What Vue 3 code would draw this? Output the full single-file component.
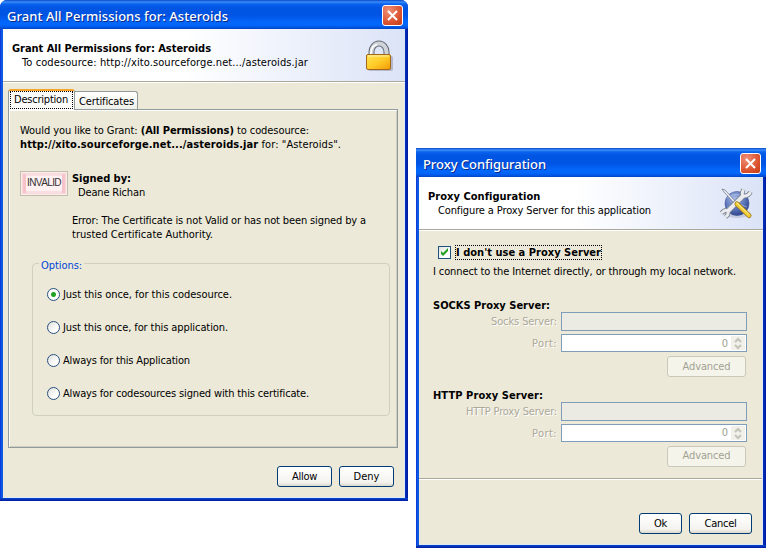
<script setup>
const options = [
  { text: 'Just this once, for this codesource.', width: 169 },
  { text: 'Just this once, for this application.', width: 165 },
  { text: 'Always for this Application', width: 127 },
  { text: 'Always for codesources signed with this certificate.', width: 246 },
]
const servers = [
  { title: 'SOCKS Proxy Server:', titleWidth: 117, label: 'Socks Server:', labelWidth: 66 },
  { title: 'HTTP Proxy Server:', titleWidth: 110, label: 'HTTP Proxy Server:', labelWidth: 91 },
]

// Spread the letters of a label so that it takes the given width.
const vFit = {
  mounted(el, { value }) {
    el.style.display = 'inline-block'
    el.style.whiteSpace = 'nowrap'
    const natural = el.getBoundingClientRect().width
    const count = el.textContent.length
    el.style.letterSpacing = (value - natural) / count + 'px'
  },
}
</script>

<template>
  <main class="desktop">
    <section class="window grant">
      <header class="titlebar">
        <span v-fit="221">Grant All Permissions for: Asteroids</span>
        <button class="close" aria-label="Close">
          <svg viewBox="0 0 19 19"><path d="M5 5l9 9M14 5l-9 9" /></svg>
        </button>
      </header>
      <div class="body">
        <div class="banner">
          <div>
            <div><b v-fit="199">Grant All Permissions for: Asteroids</b></div>
            <div class="sub"><span v-fit="286">To codesource: http://xito.sourceforge.net.../asteroids.jar</span></div>
          </div>
          <svg class="lock" viewBox="0 0 28 34">
            <defs>
              <linearGradient id="gold" x1="0" y1="0" x2="1" y2="1">
                <stop offset="0" stop-color="#ffe45a" /><stop offset=".5" stop-color="#ffcc28" /><stop offset="1" stop-color="#f39a08" />
              </linearGradient>
            </defs>
            <rect x="3" y="17" width="25" height="15" rx="2" fill="#8c8c9c" opacity=".5" />
            <path d="M6.500 17v-4a7.500 8.500 0 0 1 15 0v4" fill="none" stroke="#666b74" stroke-width="6" />
            <path d="M6.500 17v-4a7.500 8.500 0 0 1 15 0v4" fill="none" stroke="#d0d4da" stroke-width="4" />
            <path d="M6 16v-3a8 8 0 0 1 6-7.500" fill="none" stroke="#fff" stroke-width="1.500" />
            <rect x="1.500" y="15.500" width="24" height="15" rx="1.500" fill="url(#gold)" stroke="#a5651a" />
            <path d="M3 17h21" stroke="#fff2a0" />
          </svg>
        </div>

        <nav class="tabs">
          <div class="tab active"><span class="focus"><span v-fit="54">Description</span></span></div>
          <div class="tab"><span v-fit="55">Certificates</span></div>
        </nav>
        <div class="panel">
          <p><span v-fit="289">Would you like to Grant: <b>(All Permissions)</b> to codesource:</span></p>
          <p><span v-fit="321"><b>http://xito.sourceforge.net.../asteroids.jar</b> for: "Asteroids".</span></p>
          <div class="signature">
            <div class="stamp"><span v-fit="34">INVALID</span></div>
            <div>
              <p><b v-fit="59">Signed by:</b></p>
              <p class="signer"><span v-fit="67">Deane Richan</span></p>
              <p class="error"><span v-fit="294">Error: The Certificate is not Valid or has not been signed by a</span></p>
              <p><span v-fit="141">trusted Certificate Authority.</span></p>
            </div>
          </div>
          <div class="group">
            <div class="legend"><span v-fit="41">Options:</span></div>
            <div v-for="(option, i) in options" :key="i" class="option">
              <span class="radio" :class="{ on: i === 0 }"></span>
              <span v-fit="option.width">{{ option.text }}</span>
            </div>
          </div>
        </div>
        <footer class="actions">
          <button class="btn"><span v-fit="25">Allow</span></button>
          <button class="btn"><span v-fit="26">Deny</span></button>
        </footer>
      </div>
    </section>

    <section class="window proxy">
      <header class="titlebar">
        <span v-fit="123">Proxy Configuration</span>
        <button class="close" aria-label="Close">
          <svg viewBox="0 0 19 19"><path d="M5 5l9 9M14 5l-9 9" /></svg>
        </button>
      </header>
      <div class="body">
        <div class="banner">
          <div>
            <div><b v-fit="112">Proxy Configuration</b></div>
            <div class="sub"><span v-fit="213">Configure a Proxy Server for this application</span></div>
          </div>
          <svg class="tools" viewBox="0 0 34 34">
            <defs>
              <radialGradient id="globe" cx=".4" cy=".3" r=".75">
                <stop offset="0" stop-color="#a9bbe8" /><stop offset=".6" stop-color="#5872b8" /><stop offset="1" stop-color="#2c3f86" />
              </radialGradient>
            </defs>
            <ellipse cx="18" cy="29" rx="11" ry="3" fill="#9aa2bf" opacity=".4" />
            <circle cx="18" cy="17.500" r="12" fill="url(#globe)" stroke="#3e5294" stroke-width=".6" />
            <path d="M8 12q8-5 12-3M8 21q10-5 20 0" fill="none" stroke="#b9c8ed" opacity=".6" />
            <path d="M3 3l3 1 12 13-2 1L5 6z" fill="#eceff5" stroke="#777d8c" stroke-width=".8" />
            <path d="M7 27L26 8" fill="none" stroke="#747b88" stroke-width="5.600" />
            <path d="M24.500 3.500q-3 6 1 6.500 4 0 6-4M2.500 27q4-4 6-2 2 3-2 6" fill="none" stroke="#747b88" stroke-width="4.600" />
            <path d="M24.500 3.500q-3 6 1 6.500 4 0 6-4M2.500 27q4-4 6-2 2 3-2 6" fill="none" stroke="#e9ebef" stroke-width="3" />
            <path d="M9 25L25 9" fill="none" stroke="#e9ebef" stroke-width="4" />
            <path d="M18 18l12 11.500" stroke="#98761a" stroke-width="5" stroke-linecap="round" />
            <path d="M18 18l12 11.500" stroke="#f1cb35" stroke-width="3.600" stroke-linecap="round" />
            <path d="M18 17l11.500 11" stroke="#fff1a0" stroke-width="1" stroke-linecap="round" />
          </svg>
        </div>

        <div class="form">
          <div class="check">
            <span class="box"><svg viewBox="0 0 11 11"><path d="M2 4v3l2 2 5-5V1L4 6z" /></svg></span>
            <span class="focus"><b v-fit="145">I don't use a Proxy Server</b></span>
          </div>
          <p class="hint"><span v-fit="303">I connect to the Internet directly, or through my local network.</span></p>

          <div v-for="server in servers" :key="server.title" class="server">
            <p><b v-fit="server.titleWidth">{{ server.title }}</b></p>
            <div class="row">
              <label><span v-fit="server.labelWidth">{{ server.label }}</span></label>
              <div class="field"></div>
            </div>
            <div class="row">
              <label><span v-fit="25">Port:</span></label>
              <div class="field number">
                <span>0</span>
                <svg class="spin" viewBox="0 0 14 14"><path d="M4 6l3-3 3 3M4 9l3 3 3-3" /></svg>
              </div>
            </div>
            <button class="btn disabled"><span v-fit="48">Advanced</span></button>
          </div>
        </div>
        <footer class="actions">
          <button class="btn ok"><span v-fit="13">Ok</span></button>
          <button class="btn cancel"><span v-fit="32">Cancel</span></button>
        </footer>
      </div>
    </section>
  </main>
</template>

<style>
body {
  background: #fff;
}
</style>

<style scoped>
* {
  box-sizing: border-box;
}
.desktop {
  display: flex;
  gap: 8px;
  width: 766px;
  height: 548px;
  overflow: hidden;
  font: 11px/14px "DejaVu Sans Condensed", "DejaVu Sans", sans-serif;
  color: #000;
}
p {
  margin: 0;
  height: 14px;
}
svg {
  display: block;
}
button {
  font: inherit;
  padding: 0;
}
.window {
  display: flex;
  flex-direction: column;
  flex: none;
  padding: 0 3px 3px;
  border-radius: 7px 7px 0 0;
  background:
    linear-gradient(#0a48d0, #001a9c) bottom / 100% 3px no-repeat,
    linear-gradient(90deg, #0831d9 0, #1660e8 2px, #0855dd 3px, #0030c0 calc(100% - 3px), #001a9c 100%);
}
.grant {
  width: 408px;
  height: 501px;
}
.proxy {
  width: 350px;
  height: 400px;
  margin-top: 148px;
  border-radius: 0;
}
.titlebar {
  display: flex;
  align-items: center;
  justify-content: space-between;
  flex: none;
  height: 29px;
  margin: 0 -3px;
  padding: 2px 5px 0 7px;
  border-radius: inherit;
  background: linear-gradient(#0847c6 0, #3a8dfa 2px, #0a62ee 4px, #0055e2 8px, #0054e3 15px, #0466fb 22px, #0367fc 25px, #0150d9 28px, #0243bd 29px);
  color: #fff;
  font: 500 13px/18px "Noto Sans", sans-serif;
  text-shadow: 1px 1px 0 #0c2b8c;
}
.close {
  width: 21px;
  height: 21px;
  border: 1px solid #fff;
  border-radius: 3px;
  background: radial-gradient(circle at 30% 25%, #f09078, #dc5430 60%, #c23c14);
}
.close svg {
  width: 19px;
  height: 19px;
}
.close path {
  stroke: #fff;
  stroke-width: 2;
  fill: none;
}
.body {
  display: flex;
  flex-direction: column;
  flex: 1;
  background: #ece9d8;
  border-right: 1px solid #dfe9f5;
  border-bottom: 1px solid #dfe9f5;
}
.banner {
  display: flex;
  justify-content: space-between;
  flex: none;
  height: 54px;
  margin-right: -1px;
  padding: 13px 12px 0 9px;
  background: linear-gradient(90deg, #fff 45%, #dbe3f7);
  border-bottom: 1px solid #fff;
  box-shadow: inset 0 -1px 0 #aca899;
}
.sub {
  padding-left: 10px;
}
.lock {
  width: 28px;
  height: 34px;
  margin: -3px 0 0;
}
.tools {
  width: 34px;
  height: 34px;
  margin: -4px -2px 0 0;
}
.tabs {
  display: flex;
  align-items: flex-end;
  height: 26px;
  padding-left: 5px;
}
.tab {
  height: 18px;
  width: 63px;
  padding: 3px 4px 0;
  border: 1px solid #919b9c;
  border-left: 0;
  border-bottom: 0;
  border-radius: 0 3px 0 0;
  background: linear-gradient(#fff, #f0f0ea);
}
.tab.active {
  position: relative;
  width: 67px;
  height: 21px;
  margin-bottom: -1px;
  padding: 0 1px;
  border-left: 1px solid #919b9c;
  border-top: 2px solid #f5a52c;
  border-radius: 3px 3px 0 0;
  background: #fcfcfb;
}
.focus {
  display: block;
  border: 1px dotted #000;
}
.tab .focus {
  height: 18px;
  padding: 1px 3px 0;
}
.panel {
  flex: none;
  width: 390px;
  height: 339px;
  margin: 0 0 0 5px;
  padding: 14px 7px 0 11px;
  border: 1px solid #919b9c;
  box-shadow: inset 1px 1px 0 #fcfcfa, inset -1px -1px 0 #d0cebf;
}
.signature {
  display: flex;
  gap: 4px;
  margin-top: 20px;
}
.stamp {
  width: 48px;
  height: 25px;
  margin-top: -1px;
  border: 1px solid #c4bcb0;
  box-shadow: inset 0 0 0 1px #f8eee8, inset 0 0 0 2px #f9d9dc, inset 4px 0 0 1px #f6c3cb, inset -4px 0 0 1px #f6c3cb, inset 0 0 0 4px #f9dfe1;
  background: #fff0f1;
  color: #333;
  text-align: center;
  font: 10px/22px "Liberation Sans", sans-serif;
}
.signer {
  padding-left: 6px;
}
.error {
  margin-top: 14px;
}
.group {
  display: flex;
  flex-direction: column;
  width: 358px;
  height: 153px;
  margin: 21px 0 0 12px;
  padding-left: 14px;
  border: 1px solid #d0d0bf;
  border-radius: 4px;
}
.legend {
  align-self: flex-start;
  height: 14px;
  margin: -5px 0 0 -8px;
  padding: 0 2px;
  background: #ece9d8;
  color: #0046d5;
}
.option {
  display: flex;
  gap: 3px;
  height: 14px;
  margin-top: 15px;
  margin-bottom: 4px;
}
.radio {
  width: 13px;
  height: 13px;
  border: 1px solid #285080;
  border-radius: 50%;
  background: linear-gradient(135deg, #dfe0da, #fff 70%);
}
.radio.on {
  background: radial-gradient(circle, #21a121 0 2px, #fff 3px);
}
.actions {
  display: flex;
  justify-content: flex-end;
  gap: 7px;
  padding: 18px 10px 0 0;
}
.btn {
  width: 55px;
  height: 21px;
  border: 1px solid #003c74;
  border-radius: 3px;
  background: linear-gradient(#fff, #f4f3ee 80%, #dcd8cc);
  line-height: 18px;
  color: #000;
}
.btn.disabled {
  align-self: flex-end;
  flex: none;
  width: 79px;
  height: 21px;
  margin: 0 1px 0 0;
  border-color: #cac8bb;
  background: #f5f4ea;
  color: #a1a192;
}
.form {
  display: flex;
  flex-direction: column;
  height: 248px;
  padding: 14px 15px 0 14px;
  border-bottom: 1px solid #aca899;
  box-shadow: 0 1px 0 #fff;
}
.check {
  display: flex;
  align-items: center;
  gap: 4px;
  height: 15px;
  padding-left: 5px;
}
.check .focus {
  height: 15px;
  line-height: 13px;
}
.box {
  width: 13px;
  height: 13px;
  border: 1px solid #1c5180;
  background: linear-gradient(135deg, #e2e2dc, #fff 70%);
}
.box path {
  fill: #21a121;
}
.hint {
  margin-top: 5px;
}
.server {
  display: flex;
  flex-direction: column;
  height: 90px;
}
.hint + .server {
  margin-top: 20px;
}
.server p {
  height: 13px;
}
.row {
  display: flex;
  justify-content: flex-end;
  gap: 4px;
  height: 22px;
}
.row label {
  padding-top: 3px;
  color: #aca899;
  text-shadow: 1px 1px 0 #fff;
}
.field {
  width: 186px;
  height: 19px;
  border: 1px solid #7f9db9;
  background: #ebebe4;
}
.field.number {
  display: flex;
  align-items: center;
  justify-content: flex-end;
  gap: 3px;
  height: 18px;
  padding-right: 1px;
  background: #fff;
  color: #a1a192;
}
.field.number span {
  padding-top: 1px;
}
.spin {
  width: 14px;
  height: 14px;
  background: #f1f1ea;
}
.spin path {
  fill: none;
  stroke: #c3c3b8;
  stroke-width: 2;
}
.proxy .actions {
  padding: 34px 10px 0 0;
}
.ok {
  width: 43px;
}
.cancel {
  width: 63px;
}
</style>
